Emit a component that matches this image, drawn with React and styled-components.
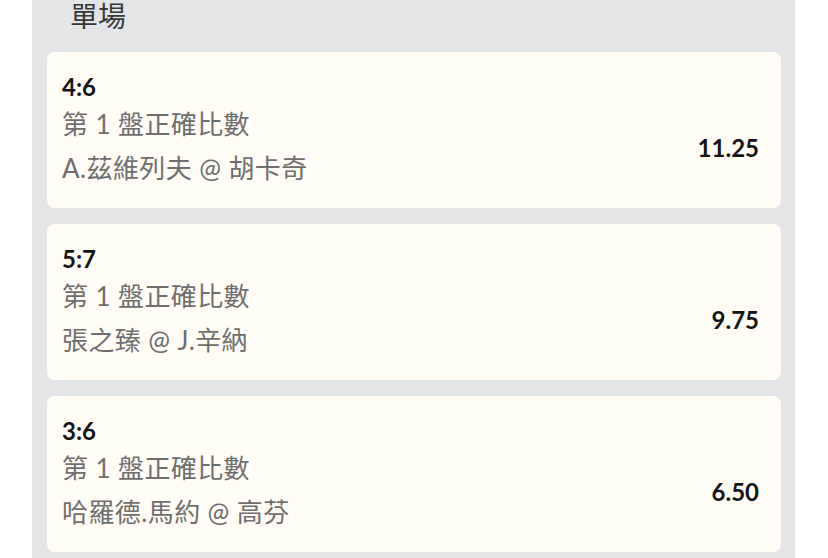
import React from "react";
import styled, { createGlobalStyle } from "styled-components";

const GlobalStyle = createGlobalStyle`
  html, body {
    margin: 0;
    padding: 0;
    background: #ffffff;
  }
  body {
    font-family: Lato, "Noto Sans CJK TC", sans-serif;
  }
`;

const Panel = styled.section`
  margin-left: 32px;
  width: 763px;
  background: #e4e5e7;
  padding: 0 14px 16px 15px;
  box-sizing: border-box;
  display: flex;
  flex-direction: column;
  gap: 16px;
`;

const Title = styled.h2`
  margin: 0 0 -16px 0;
  height: 52px;
  padding-left: 23px;
  font-size: 28px;
  line-height: 32px;
  font-weight: 400;
  color: #383838;
  font-family: Lato, "Noto Sans CJK TC", sans-serif;
`;

const Card = styled.div`
  background: #fffdf6;
  border-radius: 8px;
  height: 156px;
  box-sizing: border-box;
  padding: 20px 22px 18px 15px;
  display: flex;
  flex-direction: column;
`;

const Score = styled.div`
  font-size: 24px;
  line-height: 30px;
  font-weight: 700;
  color: #141414;
`;

const Body = styled.div`
  display: flex;
  align-items: center;
  justify-content: space-between;
`;

const Info = styled.div`
  display: flex;
  flex-direction: column;
`;

const InfoLine = styled.div`
  font-size: 26px;
  line-height: 44px;
  letter-spacing: 0.4px;
  color: #6e6e6e;
  font-weight: 400;
  white-space: nowrap;
`;

const Odds = styled.div`
  margin-top: 3px;
  font-size: 24px;
  line-height: 30px;
  font-weight: 700;
  color: #141414;
`;

const bets = [
  { score: "4:6", market: "第 1 盤正確比數", match: "A.茲維列夫 @ 胡卡奇", odds: "11.25" },
  { score: "5:7", market: "第 1 盤正確比數", match: "張之臻 @ J.辛納", odds: "9.75" },
  { score: "3:6", market: "第 1 盤正確比數", match: "哈羅德.馬約 @ 高芬", odds: "6.50" },
];

export default function App() {
  return (
    <>
      <GlobalStyle />
      <Panel>
        <Title>單場</Title>
        {bets.map((b) => (
          <Card key={b.score}>
            <Score>{b.score}</Score>
            <Body>
              <Info>
                <InfoLine>{b.market}</InfoLine>
                <InfoLine>{b.match}</InfoLine>
              </Info>
              <Odds>{b.odds}</Odds>
            </Body>
          </Card>
        ))}
      </Panel>
    </>
  );
}
